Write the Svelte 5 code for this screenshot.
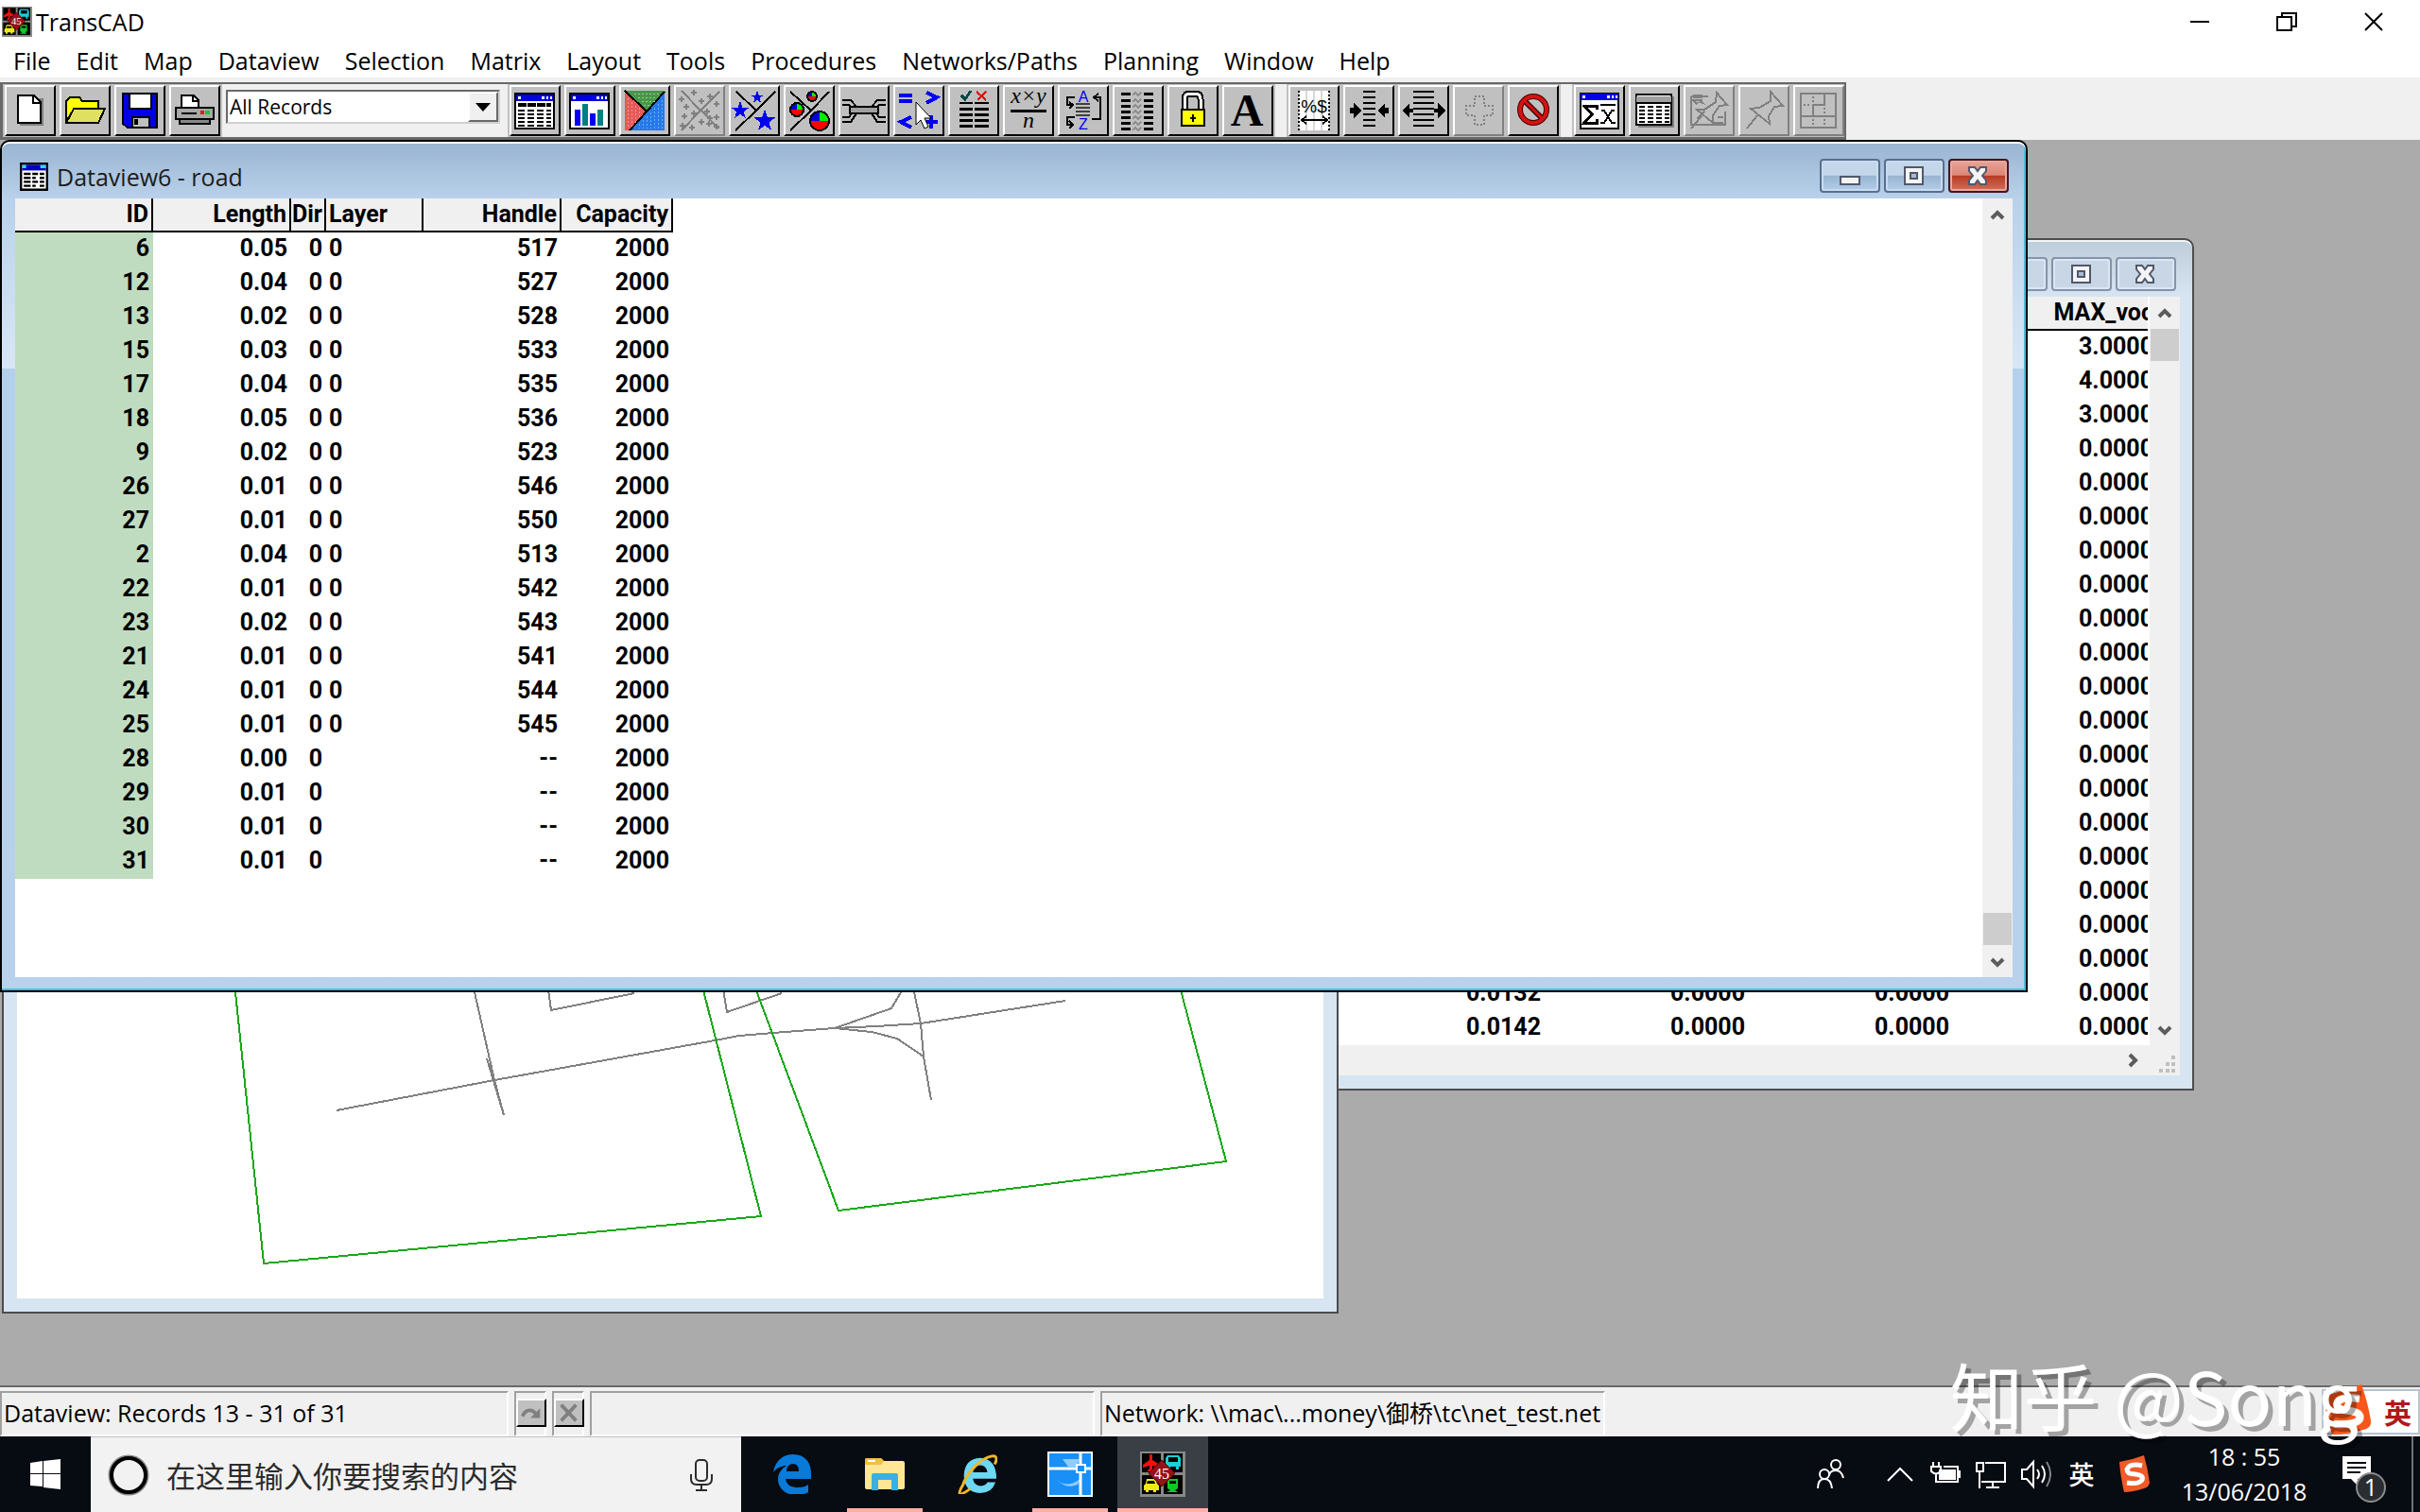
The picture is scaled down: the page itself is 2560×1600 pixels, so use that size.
<script>
  const menus = [
    "File", "Edit", "Map", "Dataview", "Selection", "Matrix", "Layout",
    "Tools", "Procedures", "Networks/Paths", "Planning", "Window", "Help"
  ];

  const fileTools = ["new", "open", "save", "print"];
  const dataTools = [
    "dataview", "chart", "theme", "dots", "stars", "pies", "join", "query",
    "fields", "formula", "sort", "columns", "lock", "font"
  ];
  const columnTools = ["format", "narrow", "widen", "add", "cancel"];
  const windowTools = ["stats", "table", "pinmap", "pin", "layout"];
  const disabledTools = ["dots", "add", "pinmap", "pin", "layout"];

  const roads = [
    [6, "0.05", 0, "0", 517],
    [12, "0.04", 0, "0", 527],
    [13, "0.02", 0, "0", 528],
    [15, "0.03", 0, "0", 533],
    [17, "0.04", 0, "0", 535],
    [18, "0.05", 0, "0", 536],
    [9, "0.02", 0, "0", 523],
    [26, "0.01", 0, "0", 546],
    [27, "0.01", 0, "0", 550],
    [2, "0.04", 0, "0", 513],
    [22, "0.01", 0, "0", 542],
    [23, "0.02", 0, "0", 543],
    [21, "0.01", 0, "0", 541],
    [24, "0.01", 0, "0", 544],
    [25, "0.01", 0, "0", 545],
    [28, "0.00", 0, "", "--"],
    [29, "0.01", 0, "", "--"],
    [30, "0.01", 0, "", "--"],
    [31, "0.01", 0, "", "--"]
  ];

  const maxVoc = ["3.0000", "4.0000", "3.0000", ...Array(18).fill("0.0000")];
  const flows = { 19: ["0.0132", "0.0000", "0.0000"], 20: ["0.0142", "0.0000", "0.0000"] };

  let selection = $state("All Records");
  let search = $state("");

  function star(cx, cy, r) {
    const points = [];
    for (let i = 0; i < 10; i++) {
      const radius = i % 2 ? r * 0.4 : r;
      const angle = (Math.PI / 5) * i - Math.PI / 2;
      points.push(`${cx + radius * Math.cos(angle)},${cy + radius * Math.sin(angle)}`);
    }
    return points.join(" ");
  }
</script>

{#snippet logo()}
  <svg class="logo" viewBox="0 0 48 48" aria-hidden="true">
    <path d="M0 0h48v48H0z" fill="#888" />
    <path d="M2 2h20v20H2zM25 2h20v20H25zM2 25h20v20H2zM25 25h20v20H25z" fill="#000" />
    <path d="M10 3h3v6l8 5v3l-8-2v3l3 3H7l3-3v-3l-7 2v-3l7-5z" fill="#f01010" />
    <path d="M29 4h12l2 3v9h-2v3h-3v-3h-6v3h-3v-3h-2V7z" fill="#18d0d8" />
    <path d="M30 6h10v5H30z" fill="#000" />
    <path d="M7 29h9l2 5 2 2v5h-3v2h-3v-2H9v2H6v-2H4v-5l2-2z" fill="#f0e818" />
    <path d="M8 31h7l1 3H7z" fill="#000" />
    <path d="M29 29h11v10l-3 2 3 2H28l4-2-3-2z" fill="#10c828" />
    <path d="M31 31h7v3h-7z" fill="#000" />
    <path d="M23 9l14 14-14 14L9 23z" fill="#981018" stroke="#500" />
    <text x="23" y="29" text-anchor="middle" font-size="16" fill="#fff">45</text>
  </svg>
{/snippet}

{#snippet tableIcon()}
  <path d="M4 7h41v37H4z" fill="#fff" stroke="#000" stroke-width="2" />
  <path d="M5 8h39v7H5z" fill="#0000e0" />
  <path d="M7 10h3v3H7zM32 10h3v3h-3zM37 10h2v3h-2zM41 10h2v3h-2z" fill="#fff" />
{/snippet}

{#snippet toolIcon(name)}
  <svg class="tool-icon" viewBox="0 0 50 50" aria-hidden="true" shape-rendering="crispEdges">
    {#if name === "new"}
      <path d="M14 12h25v29H14z" fill="#808080" />
      <path d="M12 9h17l7 7v22H12z" fill="#fff" stroke="#000" stroke-width="2" />
      <path d="M28 9v8h8" fill="none" stroke="#000" stroke-width="2" />
    {:else if name === "open"}
      <path d="M5 36V15l4-4h10l3 4h17v8H14z" fill="#ff0" stroke="#000" stroke-width="2" />
      <path d="M5 38l8-15h33l-7 15z" fill="#e0e060" stroke="#000" stroke-width="2" />
    {:else if name === "save"}
      <path d="M7 7h36v36H12l-5-4z" fill="#0000e8" stroke="#000" stroke-width="2" />
      <path d="M14 7h23v16H14z" fill="#fff" stroke="#000" stroke-width="2" />
      <path d="M17 32h18v11H17z" fill="#c0c0c0" stroke="#000" stroke-width="2" />
      <path d="M19 34h4v6h-4z" fill="#000" />
    {:else if name === "print"}
      <path d="M11 22V9h13l5 5v8z" fill="#fff" stroke="#000" stroke-width="2" />
      <path d="M23 9v6h6" fill="none" stroke="#000" stroke-width="2" />
      <path d="M5 22h40v12H5z" fill="#a8a8a8" stroke="#000" stroke-width="2" />
      <path d="M9 34h32v5H9z" fill="#888" stroke="#000" stroke-width="2" />
      <path d="M11 28h16" stroke="#000" stroke-width="2" />
      <path d="M31 25h4v4h-4z" fill="#d02020" />
      <path d="M36 25h5v4h-5z" fill="#20c040" />
    {:else if name === "dataview"}
      {@render tableIcon()}
      <path d="M7 19h35" stroke="#000" stroke-width="4" stroke-dasharray="9 1" />
      <path d="M7 25h35M7 29h35M7 33h35M7 37h35M7 41h35" stroke="#000" stroke-width="2" stroke-dasharray="7 3" />
    {:else if name === "chart"}
      {@render tableIcon()}
      <path d="M9 24h6v17H9zM25 28h6v13h-6z" fill="#0000f0" />
      <path d="M17 18h6v23h-6zM33 24h6v17h-6z" fill="#008080" />
    {:else if name === "theme"}
      <path d="M4 4l23 22L8 46H4z" fill="#e85858" />
      <path d="M5 4h41L27 26z" fill="#489848" />
      <path d="M46 5v41H9z" fill="#2878e8" />
      <path d="M4 4l23 22M46 5L9 46" stroke="#000" stroke-width="2" />
      <path d="M7 12v32M11 16v28M15 20v20M19 22v12" stroke="#f09898" stroke-dasharray="2 2" />
      <path d="M14 7h28M18 11h20M22 15h14M24 19h8" stroke="#98c898" stroke-dasharray="2 2" />
      <path d="M43 14v30M39 18v26M35 22v22M31 27v17M27 31v13M23 35v9M19 39v5" stroke="#58b8ff" stroke-dasharray="2 2" />
    {:else if name === "dots"}
      <path d="M6 4l20 21L46 5M26 25L6 46M27 25l18 19" fill="none" stroke="#808080" stroke-width="2" />
      <g stroke="#808080" stroke-width="2">
        {#each [[19, 6], [6, 13], [27, 15], [36, 10], [43, 18], [11, 21], [19, 28], [9, 31], [33, 26], [43, 32], [27, 37], [7, 41], [17, 43], [35, 39], [43, 42], [36, 33]] as [x, y]}
          <path d="M{x - 3} {y}h6M{x} {y - 3}v6" />
        {/each}
      </g>
    {:else if name === "stars"}
      <path d="M6 5l21 20L47 5M27 25L5 46" fill="none" stroke="#000" stroke-width="2" />
      <g fill="#0000f0">
        <polygon points={star(28, 11, 7)} />
        <polygon points={star(10, 25, 10)} />
        <polygon points={star(36, 36, 12)} />
      </g>
    {:else if name === "pies"}
      <path d="M5 5l22 20L46 5M27 25L5 46" fill="none" stroke="#000" stroke-width="2" />
      {#each [[28, 10, 5], [12, 24, 7], [36, 36, 10]] as [x, y, r]}
        <circle cx={x} cy={y} {r} fill="#f00" />
        <path d="M{x} {y}V{y - r}A{r} {r} 0 0 1 {x + r} {y}z" fill="#0e0" />
        <path d="M{x} {y}V{y - r}A{r} {r} 0 0 0 {x - r} {y}z" fill="#00d" />
        <circle cx={x} cy={y} {r} fill="none" stroke="#000" stroke-width="2" />
      {/each}
    {:else if name === "join"}
      <path d="M2 14h9l6 7M2 19h7l4 5M48 14h-9l-6 7M48 19h-7l-4 5M2 37h9l6-9M2 32h7l4-5M48 37h-9l-6-9M48 32h-7l-4-5" fill="none" stroke="#000" stroke-width="2" />
      <path d="M10 21h30v7H10z" fill="#a0a0a0" stroke="#000" stroke-width="2" />
    {:else if name === "query"}
      <path d="M4 9h14M4 15h14M33 6l11 5-11 6M17 32L6 37l11 6M38 30v14M31 37h14" fill="none" stroke="#0000f0" stroke-width="4" />
      <path d="M22 16v24l5-5 4 9 4-2-4-9h7z" fill="#fff" stroke="#000" shape-rendering="auto" />
    {:else if name === "fields"}
      <path d="M12 9l4 4 6-9" fill="none" stroke="#004848" stroke-width="3" />
      <path d="M28 5l10 9M38 5l-9 9" stroke="#e00000" stroke-width="2" />
      <path d="M10 17h14M26 17h15" stroke="#000" stroke-width="2" />
      <path d="M10 23h14M26 23h15M10 29h14M26 29h15M10 35h14M26 35h15M10 41h14M26 41h15" stroke="#000" stroke-width="3" />
    {:else if name === "formula"}
      <text x="25" y="17" text-anchor="middle" font-size="24" font-style="italic">x×y</text>
      <path d="M6 25h38" stroke="#000" stroke-width="3" />
      <text x="25" y="43" text-anchor="middle" font-size="24" font-style="italic">n</text>
    {:else if name === "sort"}
      <text class="sans" x="25" y="16" text-anchor="middle" font-size="16" fill="#0000f0">A</text>
      <text class="sans" x="25" y="45" text-anchor="middle" font-size="16" fill="#0000f0">Z</text>
      <path d="M17 18h15M17 22h15M17 26h15M17 30h15" stroke="#404040" stroke-width="2" />
      <path d="M16 11H8v8h6M10 16l4 3-4 4M16 32H8v8h6M10 36l4 4-4 4M34 34h9V11h-6M41 7l-5 4 5 4" fill="none" stroke="#000" stroke-width="2" />
    {:else if name === "columns"}
      <path d="M7 7h10M7 14h10M7 20h10M7 26h10M7 32h10M7 38h10M7 44h10M31 7h10M31 14h10M31 20h10M31 26h10M31 32h10M31 38h10M31 44h10" stroke="#000" stroke-width="3" />
      <path d="M19 9l3-3 3 3 3-3M19 16l3-3 3 3 3-3M19 22l3-3 3 3 3-3M19 28l3-3 3 3 3-3M19 34l3-3 3 3 3-3M19 40l3-3 3 3 3-3M19 46l3-3 3 3 3-3" fill="none" stroke="#909090" stroke-width="2" />
    {:else if name === "lock"}
      <path d="M16 24V13q0-6 6-6h5q6 0 6 6v11" fill="none" stroke="#000" stroke-width="7" />
      <path d="M16 24V13q0-6 6-6h5q6 0 6 6v11" fill="none" stroke="#fff" stroke-width="3" />
      <path d="M13 24h24v17H13z" fill="#ff0" stroke="#000" stroke-width="2" />
      <path d="M25 29v8M22 33h6" stroke="#000" stroke-width="2" />
    {:else if name === "font"}
      <text x="24" y="41" text-anchor="middle" font-size="48" font-weight="bold">A</text>
    {:else if name === "format"}
      <path d="M9 4h32v42H9z" fill="#fff" />
      <path d="M17 4v42M25 4v42M33 4v42" stroke="#d8d8d8" stroke-width="2" />
      <path d="M9 4v42M41 4v42" stroke="#000" stroke-width="2" stroke-dasharray="2 2" />
      <text class="sans" x="25" y="27" text-anchor="middle" font-size="19">%$</text>
      <path d="M12 35h27M17 31l-5 4 5 4M34 31l5 4-5 4" fill="none" stroke="#000" stroke-width="2" />
    {:else if name === "narrow"}
      <path d="M19 5h13M19 11h13M19 17h13M19 23h13M19 29h13M19 35h13M19 41h13" stroke="#000" stroke-width="2" />
      <path d="M5 22h4v-5l8 8-8 8v-5H5zM46 22h-4v-5l-8 8 8 8v-5h4z" />
    {:else if name === "widen"}
      <path d="M14 5h22M14 11h22M14 17h22M14 23h22M14 29h22M14 35h22M14 41h22" stroke="#000" stroke-width="2" />
      <path d="M2 25l8-8v6h4v4h-4v6zM48 25l-8-8v6h-4v4h4v6z" />
    {:else if name === "add"}
      <path d="M21 10h10v10h9v10h-9v10H21V30h-9V20h9z" fill="none" stroke="#808080" stroke-width="2" stroke-dasharray="2 2" />
    {:else if name === "cancel"}
      <g fill="none" shape-rendering="auto">
        <circle cx="25" cy="24" r="14" stroke="#400000" stroke-width="6" />
        <path d="M15 14l20 20" stroke="#400000" stroke-width="6" />
        <circle cx="25" cy="24" r="14" stroke="#d81010" stroke-width="4" />
        <path d="M15 14l20 20" stroke="#d81010" stroke-width="3" />
      </g>
    {:else if name === "stats"}
      <path d="M5 7h40v37H5z" fill="#fff" stroke="#000" stroke-width="2" />
      <path d="M5 7h40v7H5z" fill="#0000e0" />
      <path d="M7 9h3v3H7zM33 9h3v3h-3zM38 9h2v3h-2zM42 9h2v3h-2z" fill="#fff" />
      <path d="M22 24v-4H9l8 9-8 9h13v-4" fill="none" stroke="#000" stroke-width="3" />
      <path d="M26 19h16M27 25h3l8 13h4M41 25h-3l-8 13h-4" fill="none" stroke="#000" stroke-width="2" />
    {:else if name === "table"}
      <path d="M8 10h38v33H8z" fill="#808080" />
      <path d="M6 8h37v32H6z" fill="#fff" stroke="#000" stroke-width="2" />
      <path d="M6 10h37v6H6z" fill="#a0a0a0" />
      <path d="M6 17h37" stroke="#000" stroke-width="2" />
      <path d="M9 21h32M9 25h32M9 29h32M9 33h32M9 37h32" stroke="#000" stroke-width="2" stroke-dasharray="6 3" />
    {:else if name === "pinmap"}
      <path d="M6 10h18M6 10v30h36V26M6 14h12M12 34l8-8M30 38h10M34 32h6" fill="none" stroke="#808080" stroke-width="2" />
      <path d="M8 8h10v4H8zM6 14l6 5 4-5 5 5" fill="#808080" />
      <path d="M6 44l11-13M12 24h8l12-8 1-10 11 13-8 1-7 10v8z" fill="none" stroke="#808080" stroke-width="2" />
    {:else if name === "pin"}
      <path d="M7 44l11-14M11 23l9-1 12-7V5l13 15-9 1-6 10 1 8z" fill="none" stroke="#808080" stroke-width="2" />
    {:else if name === "layout"}
      <path d="M6 7h37v36H6zM6 31h37M19 31V19h12V7" fill="none" stroke="#808080" stroke-width="2" />
      <path d="M19 10v6M9 19h7M31 22v6M19 34v6M31 34v6" stroke="#808080" stroke-width="2" stroke-dasharray="2 2" />
    {/if}
  </svg>
{/snippet}

{#snippet tools(names)}
  <div class="group">
    {#each names as name}
      <button class="tool" class:off={disabledTools.includes(name)} aria-label={name}>
        {@render toolIcon(name)}
      </button>
    {/each}
  </div>
{/snippet}

{#snippet caption()}
  <div class="caption">
    <button aria-label="Minimize">
      <svg viewBox="0 0 24 24"><path d="M2 13h20v8H2z" fill="#f4f4f4" stroke="#50586c" stroke-width="2" /></svg>
    </button>
    <button aria-label="Maximize">
      <svg viewBox="0 0 24 24">
        <path d="M2 3h19v18H2z" fill="#f4f4f4" stroke="#50586c" stroke-width="2" />
        <path d="M8 9h7v6H8z" fill="#a8bcd4" stroke="#50586c" stroke-width="2" />
      </svg>
    </button>
    <button class="close" aria-label="Close">
      <svg viewBox="0 0 24 24"><path d="M2 3h6l3 4 3-4h6v4l-4 5 4 5v4h-6l-3-4-3 4H2v-4l4-5-4-5z" fill="#f4f4f4" stroke="#50586c" stroke-width="2" /></svg>
    </button>
  </div>
{/snippet}

{#snippet arrow(direction)}
  <svg class="arrow {direction}" viewBox="0 0 16 16" aria-hidden="true">
    <path d="M2 11l6-6 6 6" fill="none" stroke="#5c5c5c" stroke-width="4" />
  </svg>
{/snippet}

<div class="desktop">
  <header class="titlebar">
    {@render logo()}
    <h1>TransCAD</h1>
    <div class="sysbuttons">
      <button aria-label="Minimize"><svg viewBox="0 0 24 24"><path d="M2 12h20" /></svg></button>
      <button aria-label="Restore"><svg viewBox="0 0 24 24"><path d="M2 7h15v14H2zM7 7V3h15v14h-5" /></svg></button>
      <button aria-label="Close"><svg viewBox="0 0 24 24"><path d="M3 3l18 18M21 3L3 21" /></svg></button>
    </div>
  </header>

  <nav class="menubar">
    {#each menus as menu}
      <button>{menu}</button>
    {/each}
  </nav>

  <div class="rebar">
    <div class="toolbar">
      {@render tools(fileTools)}
      <div class="combo">
        <select aria-label="Selection set" bind:value={selection}>
          <option>All Records</option>
        </select>
        <span class="drop"></span>
      </div>
      {@render tools(dataTools)}
      <div class="gap"></div>
      {@render tools(columnTools)}
      <div class="gap"></div>
      {@render tools(windowTools)}
    </div>
  </div>

  <main class="workspace">
    <section class="window results">
      <div class="window-title">{@render caption()}</div>
      <div class="window-body">
        <div class="sheet clipped">
          <table>
            <colgroup>
              {#each Array(5) as _}<col class="flow" />{/each}
            </colgroup>
            <thead>
              <tr><td></td><td></td><td></td><td></td><th>MAX_voc</th></tr>
            </thead>
            <tbody>
              {#each maxVoc as value, i}
                <tr>
                  <td></td>
                  {#each flows[i] ?? ["", "", ""] as flow}
                    <td>{flow}</td>
                  {/each}
                  <td>{value}</td>
                </tr>
              {/each}
            </tbody>
          </table>
        </div>
        <div class="vscroll">
          {@render arrow("up")}
          <div class="thumb"></div>
          <div class="track"></div>
          {@render arrow("down")}
        </div>
      </div>
      <div class="hscroll">
        {@render arrow("right")}
        <svg class="grip" viewBox="0 0 18 18" aria-hidden="true">
          <path d="M13 0h4v4h-4zM7 7h4v4H7zM13 7h4v4h-4zM0 14h4v4H0zM7 14h4v4H7zM13 14h4v4h-4z" fill="#bfbfbf" />
        </svg>
      </div>
    </section>

    <section class="window map">
      <div class="window-title"></div>
      <div class="window-body">
        <svg viewBox="18 662 1382 712" role="img" aria-label="Road network" shape-rendering="crispEdges">
          <g fill="none" stroke="#808080" stroke-width="2">
            <path d="M356 1175L523 1143L756 1101L782 1096L818 1093L883 1088L927 1086L974 1083L1127 1059" />
            <path d="M502 1050L523 1143L533 1180L515 1120" />
            <path d="M579 1040L583 1069L671 1051" />
            <path d="M764 1040L769 1071L827 1051" />
            <path d="M953 1050L943 1067L883 1088L922 1092L949 1099L977 1118" />
            <path d="M967 1050L974 1083L977 1118L985 1164" />
          </g>
          <g fill="none" stroke="#18a818" stroke-width="2">
            <path d="M249 1050L279 1337L805 1287L742 1040" />
            <path d="M797 1040L887 1281L1297 1229L1247 1040" />
          </g>
        </svg>
      </div>
    </section>

    <section class="window road active">
      <div class="window-title">
        <svg class="doc-icon" viewBox="0 0 50 50" aria-hidden="true">
          <path d="M2 2h46v46H2z" fill="#fff" stroke="#000" stroke-width="4" />
          <path d="M4 4h42v10H4z" fill="#0000c0" />
          <path d="M4 4h7v6H4zM36 4h10v6H36z" fill="#40d0f0" />
          <path d="M7 20h12M7 27h12M7 34h12M7 41h12M22 20h10M22 27h6M22 34h10M22 41h6M35 20h8M35 27h8M35 34h8M35 41h8" stroke="#000" stroke-width="4" />
        </svg>
        <h2>Dataview6 - road</h2>
        {@render caption()}
      </div>
      <div class="window-body">
        <div class="sheet">
          <table class="roads">
            <colgroup>
              <col class="wide" /><col class="wide" /><col class="dir" />
              <col class="layer" /><col class="wide" /><col class="capacity" />
            </colgroup>
            <thead>
              <tr>
                <th>ID</th>
                <th>Length</th>
                <th class="tight">Dir</th>
                <th class="left">Layer</th>
                <th>Handle</th>
                <th>Capacity</th>
              </tr>
            </thead>
            <tbody>
              {#each roads as [id, length, dir, layer, handle]}
                <tr>
                  <td class="id">{id}</td>
                  <td>{length}</td>
                  <td>{dir}</td>
                  <td class="left">{layer}</td>
                  <td>{handle}</td>
                  <td>2000</td>
                </tr>
              {/each}
            </tbody>
          </table>
        </div>
        <div class="vscroll">
          {@render arrow("up")}
          <div class="track"></div>
          <div class="thumb"></div>
          {@render arrow("down")}
        </div>
      </div>
    </section>
  </main>

  <footer class="status">
    <div class="panel">Dataview: Records 13 - 31 of 31</div>
    <div class="panel small">
      <button aria-label="Redo">
        <svg viewBox="0 0 30 28"><path d="M5 18q4-9 12-6l5 5" /><path d="M25 9v11H14z" class="solid" /></svg>
      </button>
    </div>
    <div class="panel small">
      <button aria-label="Stop"><svg viewBox="0 0 30 28"><path d="M6 5l17 18M23 5L6 23" /></svg></button>
    </div>
    <div class="panel"></div>
    <div class="panel">Network: \\mac\...money\御桥\tc\net_test.net</div>
  </footer>

  <div class="ime">
    <svg viewBox="0 0 54 54" aria-hidden="true">
      <path d="M2 12Q20 8 42 0q6 16 10 38 1 8-8 10-16 5-33 5Q4 30 2 12z" fill="#f8561a" />
      <path d="M40 15q-22-3-24 6 0 6 14 7 13 2 10 9-4 6-27 5" fill="none" stroke="#fff" stroke-width="8" />
    </svg>
    <b>英</b>
  </div>
  <div class="watermark">知乎 @Song</div>

  <div class="taskbar">
    <button class="start" aria-label="Start">
      <svg viewBox="0 0 32 32"><path d="M0 4l13-2v13H0zM14 2l18-2v15H14zM0 16h13v13L0 28zM14 16h18v16l-18-2z" fill="#fff" /></svg>
    </button>
    <label class="search">
      <svg class="ring" viewBox="0 0 44 44" aria-hidden="true">
        <circle cx="22" cy="22" r="20" fill="none" stroke="#888" stroke-width="3" />
        <circle cx="22" cy="22" r="18" fill="none" stroke="#000" stroke-width="4" />
      </svg>
      <input placeholder="在这里输入你要搜索的内容" aria-label="搜索" bind:value={search} />
      <svg class="mic" viewBox="0 0 24 34" aria-hidden="true">
        <rect x="6" y="1" width="12" height="22" rx="4" />
        <path d="M1 16v5q0 6 6 6h10q6 0 6-6v-5M12 27v6M6 33h12" />
      </svg>
    </label>

    <div class="apps">
      <button aria-label="Edge">
        <svg viewBox="0 0 40 42">
          <path d="M0 19C2 7 10 0 21 0c13 0 19 9 19 20v6H13c1 7 7 9 13 9 5 0 9-1 11-3v8c-3 2-8 3-13 3C12 43 5 35 5 26c0-6 4-11 9-14-5 0-10 2-14 7zm14-1h13c0-5-2-8-6-8s-7 3-7 8z" fill="#0a7ad8" />
        </svg>
      </button>
      <button class="running" aria-label="File Explorer">
        <svg viewBox="0 0 42 42">
          <path d="M0 6q0-2 2-2h15l3 3h20q2 0 2 2v26q0 2-2 2H2q-2 0-2-2z" fill="#ffe796" />
          <path d="M0 6q0-2 2-2h15l3 3-3 4H0z" fill="#f0c040" />
          <path d="M3 6h8v2H3z" fill="#fff" />
          <path d="M7 22q0-2 2-2h24q2 0 2 2v16h-7V27H14v11H7z" fill="#38b0e0" />
        </svg>
      </button>
      <button aria-label="Internet Explorer">
        <svg viewBox="0 0 44 44">
          <path d="M43 27H17q1 8 9 8 5 0 7-4h9q-4 12-17 12Q7 42 7 23 8 5 25 4q18 1 18 23zM17 20h16q-1-8-8-8t-8 8z" fill="#6cd8f4" />
          <path d="M7 32C-4 50 6 44 14 38M5 36C10 20 26 4 38 2c6-1 6 4 3 9" fill="none" stroke="#f0b828" stroke-width="3" />
        </svg>
      </button>
      <button class="running" aria-label="AutoCAD">
        <svg class="large" viewBox="0 0 48 48">
          <path d="M1 1h46v46H1z" fill="#1890f8" stroke="#fff" stroke-width="2" />
          <path d="M16 8h18l-3 8H22z" fill="#90ccff" />
          <path d="M8 27q10 14 27 2l-3 6q-14 6-24-8z" fill="#90ccff" />
          <path d="M35 1v46M0 18h48" stroke="#fff" stroke-width="3" />
          <path d="M31 14h9v8h-9z" fill="#1890f8" stroke="#fff" stroke-width="2" />
        </svg>
      </button>
      <button class="running current" aria-label="TransCAD">{@render logo()}</button>
    </div>

    <div class="tray">
      <button class="people" aria-label="People">
        <svg viewBox="0 0 32 32"><path d="M2 31q0-10 7-10t8 10M14 17q1-5 7-5t8 8" /><circle cx="9" cy="16" r="5" /><circle cx="21" cy="6" r="5" /></svg>
      </button>
      <button aria-label="Show hidden icons">
        <svg viewBox="0 0 32 32"><path d="M3 23l13-13 13 13" /></svg>
      </button>
      <button aria-label="Battery">
        <svg viewBox="0 0 32 32"><path d="M3 3v5M9 3v5M1 8h10v5q-5 5-10 0zM6 15v9h23V8H14M31 12v8" /><path d="M10 12h16v9H10z" fill="#fff" /></svg>
      </button>
      <button aria-label="Network">
        <svg viewBox="0 0 32 32"><path d="M1 4h7v9H1zM4 13v18M10 4h21v20H6M18 24v6M11 30h14" /></svg>
      </button>
      <button aria-label="Volume">
        <svg viewBox="0 0 32 32"><path d="M1 11h5l7-8v26l-7-8H1zM17 11q4 5 0 10M22 7q6 9 0 18" /><path d="M27 3q8 13 0 26" opacity="0.5" /></svg>
      </button>
      <button class="lang" aria-label="Input language">英</button>
      <button class="sogou" aria-label="Sogou">
        <svg viewBox="0 0 34 40">
          <path d="M1 7Q14 5 27 0q4 14 6 29-1 5-6 6-12 4-21 4Q2 22 1 7z" fill="#f05a28" />
          <path d="M25 11q-13-3-16 4 0 5 9 5 9 1 7 6-3 5-16 3" fill="none" stroke="#fff" stroke-width="5" />
        </svg>
      </button>
      <time class="clock"><span>18 : 55</span><span>13/06/2018</span></time>
      <button class="notices" aria-label="Notifications">
        <svg viewBox="0 0 32 32"><path d="M1 1h30v24H17v7l-7-7H1z" fill="#fff" /><path d="M6 8h20M6 13h20M6 18h14" stroke="#070b12" stroke-width="2" /></svg>
        <span class="badge">1</span>
      </button>
      <div class="show-desktop"></div>
    </div>
  </div>
</div>

<style>
  :global(body) {
    margin: 0;
    background: #ababab;
  }

  button {
    padding: 0;
    border: 0;
    background: none;
    color: inherit;
    font: inherit;
  }

  svg {
    display: block;
    flex: none;
  }

  svg text {
    font-family: "Liberation Serif", serif;
  }

  svg text.sans {
    font-family: "Liberation Sans", sans-serif;
  }

  .desktop {
    position: relative;
    display: flex;
    flex-direction: column;
    height: 100vh;
    overflow: hidden;
    font-family: "Open Sans", "Noto Sans CJK SC", sans-serif;
    font-size: 25px;
    color: #000;
  }

  .titlebar {
    display: flex;
    align-items: center;
    height: 46px;
    padding-left: 2px;
    background: #fff;
  }

  .titlebar .logo {
    width: 32px;
    height: 32px;
    margin-right: 4px;
  }

  h1,
  h2 {
    margin: 0;
    font-size: 25px;
    font-weight: 400;
    line-height: 36px;
  }

  .sysbuttons {
    display: flex;
    margin-left: auto;
    padding-right: 3px;
  }

  .sysbuttons button {
    display: flex;
    justify-content: center;
    width: 92px;
  }

  .sysbuttons svg {
    width: 24px;
    height: 24px;
    fill: none;
    stroke: #000;
    stroke-width: 2;
  }

  .menubar {
    display: flex;
    height: 36px;
    background: #fff;
  }

  .menubar button {
    padding: 0 13px 0 14px;
    line-height: 37px;
  }

  .rebar {
    display: flex;
    height: 61px;
    padding-top: 5px;
    background: #f0f0f0;
  }

  .toolbar {
    display: flex;
    box-sizing: border-box;
    border: 2px solid #696969;
    border-width: 2px 2px 3px 3px;
    background: #c0c0c0;
  }

  .group {
    display: flex;
    align-items: center;
    gap: 4px;
    padding: 0 2px;
  }

  .group:last-child {
    padding-right: 0;
  }

  .gap {
    width: 12px;
    background: #f0f0f0;
  }

  .tool {
    box-sizing: border-box;
    width: 54px;
    height: 54px;
    border: 2px solid;
    border-color: #fff #000 #000 #fff;
    background: #c0c0c0;
  }

  .tool.off {
    border-color: #fff #808080 #808080 #fff;
  }

  .tool-icon {
    width: 50px;
    height: 50px;
    overflow: visible;
  }

  .combo {
    position: relative;
    box-sizing: border-box;
    width: 302px;
    padding: 6px 8px 0 4px;
    background: #f0f0f0;
  }

  .combo select {
    appearance: none;
    display: block;
    width: 290px;
    height: 36px;
    padding: 0 2px;
    border: 2px solid;
    border-color: #696969 #d0d0d0 #d0d0d0 #696969;
    border-radius: 0;
    background: #fff;
    color: #000;
    font-family: "Open Sans", sans-serif;
    font-size: 21px;
  }

  .drop {
    position: absolute;
    top: 8px;
    right: 10px;
    box-sizing: border-box;
    width: 32px;
    height: 32px;
    border: 2px solid;
    border-color: #fff #696969 #696969 #fff;
    background: #f0f0f0;
    pointer-events: none;
  }

  .drop::after {
    content: "";
    position: absolute;
    top: 10px;
    left: 6px;
    border: 8px solid transparent;
    border-top: 9px solid #000;
    border-bottom: 0;
  }

  .workspace {
    position: relative;
    flex: 1;
    min-height: 0;
    overflow: hidden;
    background: #ababab;
  }

  .window {
    position: absolute;
    display: flex;
    flex-direction: column;
    box-sizing: border-box;
    padding: 0 14px 14px;
    border: 2px solid #4c4c4c;
    border-radius: 10px 10px 0 0;
    background: linear-gradient(#bfcddb, #d7e4f2 60px);
    box-shadow: inset 0 2px #f0f4f8;
  }

  .window.active {
    border-color: #000;
    background: linear-gradient(#99b4d1, #b9d1ea 60px, #d8e7f6 240px, #b4d0ec 240px, #b9d1ea);
    box-shadow: inset 0 2px #fff, inset -2px -2px #4cbcd4;
  }

  .road {
    top: 0;
    left: 0;
    width: 2145px;
    height: 902px;
  }

  .results {
    top: 104px;
    left: 1182px;
    width: 1139px;
    height: 902px;
    padding-right: 13px;
  }

  .map {
    top: 452px;
    left: 2px;
    width: 1414px;
    height: 790px;
    border-radius: 0;
  }

  .window-title {
    display: flex;
    align-items: flex-end;
    flex: none;
    height: 60px;
  }

  .doc-icon {
    width: 32px;
    height: 30px;
    margin: 0 8px 8px 4px;
  }

  h2 {
    padding-bottom: 5px;
    color: #1c1c1c;
  }

  .caption {
    display: flex;
    gap: 4px;
    margin: 0 4px 6px auto;
  }

  .caption button {
    display: flex;
    align-items: center;
    justify-content: center;
    box-sizing: border-box;
    width: 64px;
    height: 36px;
    border: 2px solid #8394aa;
    border-radius: 4px;
    background: #c8d6e6;
    box-shadow: inset 0 0 0 2px #dbe6f2;
  }

  .active .caption button {
    border-color: #5a6f8c;
    background: linear-gradient(#c3d6ea 48%, #98b4d2 50%, #b4cde8);
    box-shadow: inset 0 0 0 2px #c8dcf0;
  }

  .active .caption .close {
    border-color: #441520;
    background: linear-gradient(#e8a497, #dc8677 48%, #b83a24 50%, #d4705c);
    box-shadow: inset 0 0 0 2px #e8a89c;
  }

  .caption svg {
    width: 24px;
    height: 24px;
  }

  .window-body {
    display: flex;
    flex: 1;
    min-height: 0;
    background: #fff;
  }

  .map .window-body svg {
    width: 100%;
    height: 100%;
  }

  .sheet {
    flex: 1;
    min-width: 0;
    overflow: hidden;
  }

  .sheet.clipped {
    border-right: 2px solid #fff;
  }

  table {
    table-layout: fixed;
    width: 1080px;
    border-collapse: separate;
    border-spacing: 0;
    font-family: Roboto, "Liberation Sans", sans-serif;
    font-size: 25px;
    font-weight: 700;
    line-height: 33px;
    text-align: right;
  }

  .roads {
    width: 696px;
  }

  .flow {
    width: 216px;
  }

  .wide {
    width: 146px;
  }

  .dir {
    width: 37px;
  }

  .layer {
    width: 103px;
  }

  .capacity {
    width: 118px;
  }

  th,
  td {
    box-sizing: border-box;
    height: 36px;
    padding: 0;
    vertical-align: top;
    font-weight: 700;
  }

  thead th,
  thead td {
    border-bottom: 2px solid #000;
    background: #f0f0f0;
  }

  .roads th {
    padding: 0 3px;
    border-right: 2px solid #000;
  }

  .roads td {
    padding: 0 4px 0 3px;
  }

  .roads th.tight {
    padding: 0 2px 0 0;
  }

  .roads .left {
    text-align: left;
  }

  .id {
    background: #c0dcc0;
  }

  .vscroll {
    display: flex;
    flex-direction: column;
    align-items: center;
    justify-content: space-between;
    width: 32px;
    background: #f0f0f0;
  }

  .track {
    flex: 1;
  }

  .thumb {
    width: 30px;
    height: 34px;
    background: #cdcdcd;
  }

  .arrow {
    width: 16px;
    height: 16px;
    margin: 10px 0 8px;
  }

  .arrow.down {
    transform: rotate(180deg);
  }

  .arrow.right {
    margin: 0;
    transform: rotate(90deg);
  }

  .hscroll {
    display: flex;
    align-items: center;
    justify-content: flex-end;
    gap: 20px;
    height: 32px;
    padding-right: 4px;
    background: #f0f0f0;
  }

  .grip {
    width: 18px;
    height: 18px;
    margin-top: 8px;
  }

  .status {
    display: flex;
    gap: 6px;
    box-sizing: border-box;
    height: 54px;
    padding: 4px 0 0;
    border-top: 2px solid #696969;
    background: #f0f0f0;
  }

  .panel {
    box-sizing: border-box;
    width: 534px;
    height: 48px;
    padding-left: 2px;
    border: 2px solid;
    border-color: #a0a0a0 #fff #fff #a0a0a0;
    line-height: 42px;
    white-space: nowrap;
  }

  .panel:first-child {
    width: 538px;
  }

  .panel.small {
    width: 34px;
    padding: 6px 0 0;
  }

  .panel button {
    display: block;
    box-sizing: border-box;
    width: 32px;
    height: 30px;
    border: 2px solid;
    border-color: #fff #000 #000 #fff;
    background: #c0c0c0;
  }

  .panel svg {
    width: 28px;
    height: 26px;
    fill: none;
    stroke: #808080;
    stroke-width: 4;
  }

  .panel .solid {
    fill: #808080;
    stroke: none;
  }

  .ime {
    position: absolute;
    right: 0;
    bottom: 82px;
    display: flex;
    align-items: center;
    gap: 12px;
    box-sizing: border-box;
    width: 104px;
    height: 48px;
    border: 2px solid #b8c4d4;
    background: #fff;
    color: #b01818;
    font-size: 29px;
  }

  .ime svg {
    width: 54px;
    height: 54px;
    margin: 0 0 4px -2px;
  }

  .watermark {
    position: absolute;
    right: 65px;
    bottom: 84px;
    color: #fff;
    font-family: "Noto Sans CJK SC", sans-serif;
    font-size: 78px;
    line-height: 82px;
    text-shadow: 5px 5px rgba(0, 0, 0, 0.32);
    pointer-events: none;
  }

  .taskbar {
    display: flex;
    height: 80px;
    background: #070b12;
    color: #fff;
  }

  .start {
    display: flex;
    align-items: center;
    justify-content: center;
    width: 96px;
  }

  .start svg {
    width: 32px;
    height: 32px;
  }

  .search {
    display: flex;
    align-items: center;
    box-sizing: border-box;
    width: 688px;
    padding: 0 30px 0 18px;
    border-top: 1px solid #c0c0c0;
    background: #f2f2f2;
  }

  .ring {
    width: 44px;
    height: 44px;
  }

  .search input {
    flex: 1;
    min-width: 0;
    margin-left: 18px;
    padding: 0;
    border: 0;
    background: none;
    font-family: "Noto Sans CJK SC", sans-serif;
    font-size: 31px;
  }

  .search input::placeholder {
    color: #2c2c2c;
  }

  .mic {
    width: 24px;
    height: 34px;
    fill: none;
    stroke: #2c2c2c;
    stroke-width: 2;
  }

  .apps {
    display: flex;
    gap: 2px;
    margin-left: 6px;
  }

  .apps button {
    display: flex;
    align-items: center;
    justify-content: center;
    width: 96px;
    border-top: 4px solid transparent;
    border-bottom: 4px solid transparent;
  }

  .apps svg {
    width: 42px;
    height: 42px;
  }

  .apps .large,
  .apps .logo {
    width: 48px;
    height: 48px;
  }

  .apps .running {
    background: linear-gradient(#ffb0a6, #ffb0a6) bottom / 80px 4px no-repeat border-box;
  }

  .apps .current {
    background: linear-gradient(#ffb0a6, #ffb0a6) bottom / 100% 4px no-repeat border-box, #3a3f45 border-box;
  }

  .tray {
    display: flex;
    margin-left: auto;
  }

  .tray button {
    display: flex;
    align-items: center;
    justify-content: center;
    width: 48px;
  }

  .tray svg {
    width: 32px;
    height: 32px;
    fill: none;
    stroke: #fff;
    stroke-width: 2;
  }

  .tray .people {
    width: 98px;
  }

  .tray .lang {
    padding-bottom: 2px;
    font-size: 27px;
    font-weight: 500;
  }

  .tray .sogou {
    width: 64px;
  }

  .sogou svg {
    width: 34px;
    height: 40px;
    stroke: none;
  }

  .clock {
    display: flex;
    flex-direction: column;
    align-items: center;
    justify-content: center;
    width: 168px;
    line-height: 37px;
  }

  .tray .notices {
    position: relative;
    width: 70px;
  }

  .notices svg {
    margin-bottom: 8px;
    stroke: none;
  }

  .badge {
    position: absolute;
    right: 4px;
    bottom: 10px;
    box-sizing: border-box;
    width: 32px;
    height: 32px;
    border: 2px solid #8c8c8c;
    border-radius: 50%;
    background: #2a2d31;
    line-height: 27px;
  }

  .show-desktop {
    width: 7px;
    margin-left: 23px;
    border-left: 2px solid #70747a;
  }
</style>
